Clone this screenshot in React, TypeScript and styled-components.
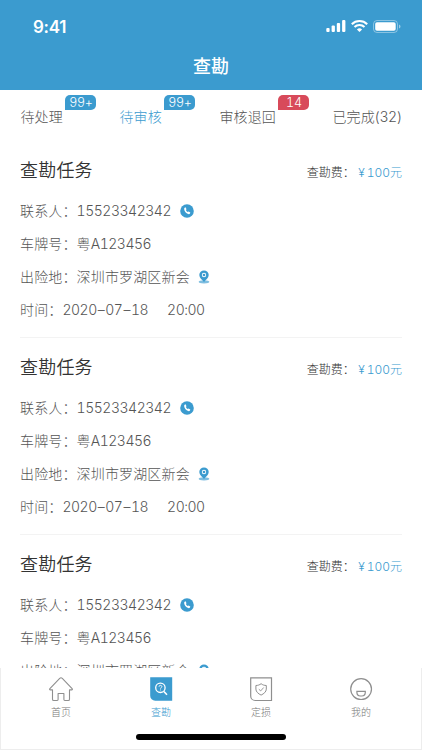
import React from 'react';
import styled, { createGlobalStyle } from 'styled-components';

const BLUE = '#3b9bcf';
const RED = '#d84a5a';

const GlobalStyle = createGlobalStyle`
  * { box-sizing: border-box; }
  body {
    margin: 0;
    background: #fff;
    font-family: Inter, "Noto Sans CJK SC", sans-serif;
    font-weight: 300;
    color: #555;
  }
  svg { display: block; flex: none; }
`;

const Screen = styled.div`
  width: 422px;
  height: 750px;
  display: flex;
  flex-direction: column;
  overflow: hidden;
  background: #fff;
`;

const Header = styled.header`
  height: 90px;
  flex: none;
  background: ${BLUE};
  color: #fff;
`;

const StatusBar = styled.div`
  height: 52px;
  display: flex;
  align-items: center;
  justify-content: space-between;
  padding: 0 21px 0 33px;
`;

const Clock = styled.span`
  font-size: 17px;
  line-height: 20px;
  font-weight: 600;
  letter-spacing: -0.3px;
  padding-top: 1px;
`;

const StatusIcons = styled.div`
  display: flex;
  align-items: center;
  gap: 5px;
`;

const PageTitle = styled.h1`
  margin: 0;
  padding-top: 1px;
  font-size: 18px;
  line-height: 28px;
  font-weight: 500;
  text-align: center;
`;

const Tabs = styled.nav`
  height: 54px;
  flex: none;
  display: grid;
  grid-template-columns: 99px 100px 1fr auto;
  align-items: center;
  padding: 0 20px 0 20.5px;
`;

const Tab = styled.div<{ $active?: boolean }>`
  position: relative;
  justify-self: start;
  font-size: 14px;
  line-height: 20px;
  letter-spacing: 0.1px;
  color: ${(p) => (p.$active ? BLUE : '#555')};
`;

const Badge = styled.span<{ $color: string }>`
  position: absolute;
  left: calc(100% + 2.5px);
  top: -12px;
  width: 31px;
  height: 15px;
  border-radius: 5px 5px 5px 0;
  background: ${(p) => p.$color};
  color: #fff;
  font-size: 12.5px;
  line-height: 15px;
  font-weight: 350;
  letter-spacing: -0.3px;
  font-variant-numeric: tabular-nums;
  text-align: center;
`;

const List = styled.main`
  flex: 1;
  min-height: 0;
  overflow: hidden;
  padding: 0 20px;
`;

const Card = styled.article`
  height: 197px;
  padding-top: 11px;
  border-bottom: 1px solid #f3f3f3;
  &:first-child { height: 194px; padding-top: 8px; }
`;

const CardHead = styled.div`
  height: 42px;
  display: flex;
  align-items: flex-start;
  justify-content: space-between;
  padding-top: 6px;
`;

const CardTitle = styled.h2`
  margin: 0;
  font-size: 18px;
  line-height: 26px;
  font-weight: 350;
  letter-spacing: 0.2px;
  color: #333;
`;

const Fee = styled.div`
  display: flex;
  font-size: 12px;
  line-height: 18px;
  padding-top: 6px;
  color: #333;
`;

const Price = styled.span`
  display: flex;
  gap: 2px;
  margin-left: 3.5px;
  color: ${BLUE};
  font-variant-numeric: tabular-nums;
`;

const Row = styled.div`
  height: 33px;
  display: flex;
  align-items: center;
  font-size: 14px;
  line-height: 20px;
  letter-spacing: 0.15px;
  white-space: pre;
`;

const Value = styled.span`
  font-variant-numeric: tabular-nums;
  margin-right: 8px;
`;

const NumberValue = styled.span`
  font-variant-numeric: tabular-nums;
  letter-spacing: -0.48px;
  margin-right: 9px;
`;

const DateValue = styled(NumberValue)`
  margin-right: 19px;
`;

const Dash = styled.span`
  display: inline-block;
  width: 8.5px;
  text-align: center;
`;

const BottomBar = styled.footer`
  height: 82px;
  flex: none;
  padding: 0 11px;
  background: #fff;
  border: solid #ededed;
  border-width: 0 1px 1px;
`;

const NavItems = styled.div`
  display: grid;
  grid-template-columns: repeat(4, 100px);
  margin-left: -1px;
  height: 64px;
`;

const NavItem = styled.div<{ $active?: boolean }>`
  display: flex;
  flex-direction: column;
  align-items: center;
  padding-top: 8px;
  gap: 3px;
  font-size: 10px;
  line-height: 14px;
  color: ${(p) => (p.$active ? BLUE : '#777')};
`;

const HomeIndicator = styled.div`
  width: 150px;
  height: 6px;
  margin: 2px auto 0;
  border-radius: 3px;
  background: #000;
`;

const SignalIcon = () => (
  <svg width="20" height="12" viewBox="0 0 20 12" fill="#fff">
    <rect x="0.3" y="8" width="3.3" height="4" rx="1" />
    <rect x="5.6" y="5.6" width="3.3" height="6.4" rx="1" />
    <rect x="10.8" y="3" width="3.3" height="9" rx="1" />
    <rect x="16.1" y="0" width="3.3" height="12" rx="1" />
  </svg>
);

const WifiIcon = () => (
  <svg width="17" height="12" viewBox="0 0 17 12" fill="none" stroke="#fff" strokeWidth="2.1">
    <path d="M.8 4.2a11 11 0 0 1 15.4 0M3.5 7a7.2 7.2 0 0 1 10 0" />
    <path d="M8.5 12 5.900 9.400a3.800 3.800 0 0 1 5.200 0Z" fill="#fff" stroke="none" />
  </svg>
);

const BatteryIcon = () => (
  <svg width="28" height="13" viewBox="0 0 28 13">
    <rect x=".5" y=".5" width="24" height="12" rx="3.5" fill="none" stroke="#fff" strokeOpacity=".4" />
    <rect x="2.2" y="2.2" width="20.5" height="8.6" rx="1.8" fill="#fff" />
    <path d="M26 4.500c2 .7 2 3.300 0 4Z" fill="#fff" fillOpacity=".5" />
  </svg>
);

const PhoneIcon = () => (
  <svg width="14" height="14" viewBox="0 0 14 14">
    <circle cx="7" cy="7" r="6.8" fill={BLUE} />
    <path
      d="M4.600 3.800 5.600 3.300 6.500 5.200 5.900 6c.3.900 1 1.600 1.800 2l.9-.5 1.700 1.100-.3 1c-.6.700-1.500.7-2.400.2C5.800 8.900 4.500 7.300 4.200 5.400c-.1-.8 0-1.300.4-1.600Z"
      fill="#fff"
    />
  </svg>
);

const PinIcon = () => (
  <svg width="12" height="14" viewBox="0 0 12 14">
    <ellipse cx="6" cy="11.800" rx="5.300" ry="1.600" fill={BLUE} fillOpacity=".65" />
    <path
      fillRule="evenodd"
      d="M6 .4a4.700 4.700 0 0 0-4.700 4.700C1.300 8 4 9.800 6 12c2-2.200 4.700-4 4.700-6.900A4.700 4.700 0 0 0 6 .4Zm0 2.400a2.200 2.200 0 1 1 0 4.400 2.200 2.200 0 0 1 0-4.400Z"
      fill={BLUE}
    />
    <circle cx="6" cy="5" r="1.300" fill={BLUE} />
  </svg>
);

const HomeIcon = () => (
  <svg width="26" height="26" viewBox="0 0 26 26" fill="none" stroke="#8f8f8f" strokeWidth="1.100" strokeLinejoin="round">
    <path d="M11.700 2.300 1.900 12.600c-.6.700-.3 1.300.5 1.300h2.100v9.300c0 .9.400 1.300 1.200 1.300h3.500c.6 0 .9-.3.900-.9v-6.100h5.800v6.100c0 .6.300.9.900.9h3.500c.8 0 1.200-.4 1.200-1.300v-9.300h2.100c.8 0 1.100-.6.500-1.300L14.300 2.300c-.9-.8-1.700-.8-2.600 0Z" />
  </svg>
);

const SurveyIcon = () => (
  <svg width="26" height="26" viewBox="0 0 26 26">
    <path d="M2.200 1.300h22v23.400H7.200a5 5 0 0 1-5-5Z" fill={BLUE} />
    <g fill="none" stroke="#fff">
      <circle cx="12.400" cy="11.800" r="4.700" strokeWidth="1.300" />
      <path d="m15.900 15.500 3.100 3.300" strokeWidth="1.600" />
      <path d="M11 10.700c0-1.800 2.900-1.800 2.900 0 0 1-1.400 1-1.400 2M12.500 13.500v.9" strokeWidth=".9" />
    </g>
  </svg>
);

const LossIcon = () => (
  <svg width="26" height="26" viewBox="0 0 26 26" fill="none" stroke="#8f8f8f">
    <path d="M2.700 1.800h20.800v22.700H7.200a4.500 4.500 0 0 1-4.500-4.500Z" strokeWidth="1.200" />
    <path d="M13.100 7.700c1.600 1.300 3.200 1.700 5.200 1.800v3.600c0 2.700-2.400 4.600-5.200 6-2.800-1.400-5.200-3.300-5.200-6V9.500c2-.1 3.600-.5 5.200-1.800Z" />
    <path d="m10.800 13.200 1.900 1.700 3-3.400" strokeWidth=".9" />
  </svg>
);

const ProfileIcon = () => (
  <svg width="26" height="26" viewBox="0 0 26 26" fill="none" stroke="#8f8f8f" strokeWidth="1.200">
    <circle cx="13.100" cy="13.100" r="10.400" />
    <path d="M8.900 15.300h8.400v1c0 2.300-1.500 3.700-3.500 3.700h-1.400c-2 0-3.500-1.400-3.500-3.700Z" />
  </svg>
);

const tabs = [
  { label: '待处理', badge: '99+', color: BLUE },
  { label: '待审核', badge: '99+', color: BLUE, active: true },
  { label: '审核退回', badge: '14', color: RED },
  { label: '已完成(32)' },
];

const nav = [
  { label: '首页', Icon: HomeIcon },
  { label: '查勘', Icon: SurveyIcon, active: true },
  { label: '定损', Icon: LossIcon },
  { label: '我的', Icon: ProfileIcon },
];

const tasks = Array.from({ length: 3 }, (_, id) => ({
  id,
  phone: '15523342342',
  region: '粤',
  plate: 'A123456',
  place: '深圳市罗湖区新会',
  date: ['2020', '07', '18'],
  time: '20:00',
}));

export default function App() {
  return (
    <Screen>
      <GlobalStyle />
      <Header>
        <StatusBar>
          <Clock>9:41</Clock>
          <StatusIcons>
            <SignalIcon />
            <WifiIcon />
            <BatteryIcon />
          </StatusIcons>
        </StatusBar>
        <PageTitle>查勘</PageTitle>
      </Header>
      <Tabs>
        {tabs.map((t) => (
          <Tab key={t.label} $active={t.active}>
            {t.label}
            {t.badge && <Badge $color={t.color}>{t.badge}</Badge>}
          </Tab>
        ))}
      </Tabs>
      <List>
        {tasks.map((t) => (
          <Card key={t.id}>
            <CardHead>
              <CardTitle>查勘任务</CardTitle>
              <Fee>
                查勘费：
                <Price>
                  <span>¥</span>
                  <span>100元</span>
                </Price>
              </Fee>
            </CardHead>
            <Row>
              联系人：<NumberValue>{t.phone}</NumberValue>
              <PhoneIcon />
            </Row>
            <Row>
              车牌号：{t.region}
              <NumberValue>{t.plate}</NumberValue>
            </Row>
            <Row>
              出险地：<Value>{t.place}</Value>
              <PinIcon />
            </Row>
            <Row>
              时间：
              <DateValue>
                {t.date[0]}<Dash>–</Dash>{t.date[1]}<Dash>–</Dash>{t.date[2]}
              </DateValue>
              <NumberValue>{t.time}</NumberValue>
            </Row>
          </Card>
        ))}
      </List>
      <BottomBar>
        <NavItems>
          {nav.map(({ label, Icon, active }) => (
            <NavItem key={label} $active={active}>
              <Icon />
              {label}
            </NavItem>
          ))}
        </NavItems>
        <HomeIndicator />
      </BottomBar>
    </Screen>
  );
}
